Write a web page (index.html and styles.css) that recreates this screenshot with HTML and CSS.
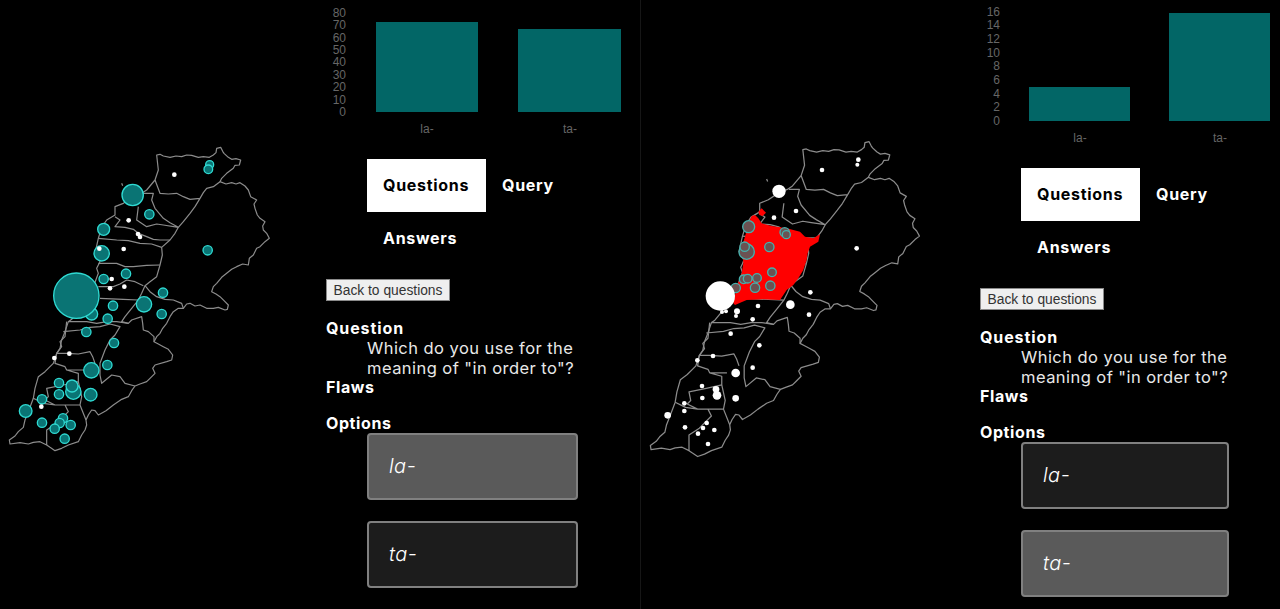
FILE: index.html
```html
<!DOCTYPE html>
<html lang="en">
<head>
<meta charset="utf-8">
<title>Language map</title>
<link rel="stylesheet" href="styles.css">
</head>
<body>
<main class="page">
  <section class="panel">
    <div class="map-col">
      <svg class="map map-a" viewBox="0 0 840 960">
        <defs>
          <g id="lb" class="outline">
            <path d="M470 45L480 43 490 48 510 52 528 48 545 50 560 45 575 46 595 52 610 50 628 52 640 45 648 38 650 25 662 22 668 34 672 40 685 52 695 58 708 56 722 60 718 75 705 76 700 85 680 100 665 115 660 125 678 132 695 128 708 132 720 128 735 138 745 150 752 170 770 180 762 192 765 205 772 225 780 235 795 245 788 258 790 270 800 280 808 295 795 305 780 320 770 325 760 345 748 355 745 375 728 372 710 380 695 388 680 400 665 412 650 430 640 440 635 455 648 462 660 470 672 482 685 495 682 508 675 510 655 502 640 505 620 505 600 495 585 498 570 490 560 492 550 505 535 505 520 515 510 530 500 550 488 565 480 580 470 590 462 605 475 612 490 620 505 628 518 645 515 660 500 665 465 675 458 685 465 700 450 715 440 725 420 732 405 738 395 752 385 770 365 778 340 795 318 812 295 825 285 812 275 810 265 825 258 840 260 855 255 870 245 885 235 905 205 915 185 925 165 932 150 922 140 915 120 905 100 907 85 912 60 908 30 912 28 900 45 888 55 875 70 862 75 840 85 815 100 775 105 745 115 710 135 695 150 680 160 670 170 640 180 625 185 600 195 575 205 545 215 538 230 520 280 440 295 400 290 385 300 365 285 340 295 295 305 262 320 240 345 225 345 200 370 190 400 170 425 160 440 150 465 120 475 90Z"/>
            <path d="M365 130L368 137M465 120L480 160 505 162 530 160 550 170 570 178 600 175 610 158 620 145 640 140 660 125M600 175L585 200 570 220 550 245 535 262 525 280 510 300 485 322 487 345 480 375 470 410 450 425 435 437 425 460 415 480 395 505 375 530 365 545 385 550 395 540 425 530 428 550 430 570 445 575 462 590 462 605"/>
            <path d="M430 160L460 160 455 180 465 205 490 235 510 248 535 262M415 200L410 240 440 260 470 252 490 255 535 262M345 230L360 240 345 260 375 262 400 268 415 280 440 290 460 298 480 300 510 300M295 295L350 300 385 302 420 310 455 312 485 322M295 370L350 370 375 380 400 380 440 376 480 375M295 440L340 440 360 432 380 420 405 425 430 437M300 475L370 478 415 480M435 437L450 455 470 470 495 478 520 480 545 490 550 505"/>
            <path d="M205 545L260 545 290 550 320 545 350 545 385 550M200 545L195 590 180 605 185 620 170 640 200 640 235 642 270 635 278 650 285 670M190 575L240 570 270 562 300 560 330 552 360 560 345 585 330 600 315 630 300 670 300 705 305 730 335 705 360 710 375 730 405 738M170 640L165 670 195 680 200 690 250 690M200 690L235 700 235 725 190 735 140 745 145 770 135 780 165 795 190 795 240 795 245 770 235 725M100 775L130 790 165 795M195 795L205 815 170 850 140 870 140 915M240 795L258 840"/>
          </g>
        </defs>
        <use href="#lb"/>
        <g class="hit">
          <circle cx="629" cy="74" r="12"/><circle cx="625" cy="88" r="13"/><circle cx="398" cy="165" r="32"/><circle cx="448" cy="223" r="14"/><circle cx="311" cy="268" r="18"/><circle cx="305" cy="340" r="23"/><circle cx="623" cy="331" r="14"/><circle cx="378" cy="401" r="14"/><circle cx="311" cy="417" r="14"/><circle cx="489" cy="458" r="14"/><circle cx="275" cy="522" r="18"/><circle cx="229" cy="467" r="68"/><circle cx="339" cy="497" r="14"/><circle cx="432" cy="493" r="23"/><circle cx="485" cy="522" r="14"/><circle cx="323" cy="536" r="14"/><circle cx="259" cy="576" r="14"/><circle cx="342" cy="609" r="14"/><circle cx="274" cy="691" r="23"/><circle cx="322" cy="675" r="14"/><circle cx="177" cy="729" r="14"/><circle cx="220" cy="755" r="23"/><circle cx="216" cy="738" r="18"/><circle cx="177" cy="763" r="14"/><circle cx="272" cy="764" r="19"/><circle cx="126" cy="778" r="14"/><circle cx="77" cy="813" r="19"/><circle cx="126" cy="848" r="14"/><circle cx="189" cy="835" r="14"/><circle cx="179" cy="849" r="14"/><circle cx="164" cy="866" r="14"/><circle cx="212" cy="855" r="14"/><circle cx="194" cy="896" r="14"/>
        </g>
        <g class="dot">
          <circle cx="523" cy="104" r="7"/><circle cx="386" cy="241" r="7"/><circle cx="414" cy="282" r="7"/><circle cx="420" cy="291" r="7"/><circle cx="298" cy="326" r="7"/><circle cx="371" cy="327" r="7"/><circle cx="335" cy="417" r="7"/><circle cx="373" cy="440" r="7"/><circle cx="330" cy="445" r="7"/><circle cx="208" cy="641" r="7"/><circle cx="163" cy="654" r="7"/><circle cx="124" cy="800" r="7"/>
        </g>
      </svg>
    </div>
    <div class="side">
      <svg class="chart chart-a" viewBox="0 0 330 140">
        <g class="tick">
          <text x="36" y="17">80</text><text x="36" y="29">70</text><text x="36" y="42">60</text><text x="36" y="54">50</text><text x="36" y="66">40</text><text x="36" y="79">30</text><text x="36" y="91">20</text><text x="36" y="104">10</text><text x="36" y="116">0</text>
        </g>
        <rect class="bar" x="66" y="22" width="102" height="90"/>
        <rect class="bar" x="208" y="29" width="103" height="83"/>
        <text class="cat" x="117" y="133">la-</text>
        <text class="cat" x="260" y="133">ta-</text>
      </svg>
      <nav class="tabs">
        <a class="tab tab-on">Questions</a>
        <a class="tab">Query</a>
        <a class="tab">Answers</a>
      </nav>
      <button class="back" type="button">Back to questions</button>
      <dl class="detail">
        <dt class="qlabel">Question</dt>
        <dd>Which do you use for the meaning of "in order to"?</dd>
        <dt class="flaws">Flaws</dt>
        <dt class="opts">Options</dt>
        <dd class="options">
          <div class="option option-on">la-</div>
          <div class="option">ta-</div>
        </dd>
      </dl>
    </div>
  </section>
  <section class="panel panel-b">
    <div class="map-col">
      <svg class="map map-b" viewBox="0 0 840 990">
        <use href="#lb" transform="translate(30 35) scale(1.035 1.038) translate(-27 -22)"/>
        <path class="red" d="M335 258L345 255 355 265 365 280 395 288 420 292 440 295 480 305 495 320 520 325 540 313 535 335 510 350 503 370 500 390 490 420 475 445 460 465 440 480 420 510 370 508 320 510 285 525 280 520 290 470 305 430 310 400 305 350 315 320 325 280ZM355 245L365 235 378 248 368 258 358 255Z"/>
        <g class="dim">
          <circle cx="326" cy="290" r="18"/><circle cx="434" cy="307" r="14"/><circle cx="439" cy="314" r="12"/><circle cx="320" cy="365" r="23"/><circle cx="314" cy="350" r="14"/><circle cx="388" cy="351" r="14"/><circle cx="396" cy="427" r="13"/><circle cx="311" cy="448" r="13"/><circle cx="323" cy="446" r="13"/><circle cx="351" cy="444" r="13"/><circle cx="345" cy="473" r="14"/><circle cx="391" cy="467" r="14"/><circle cx="287" cy="474" r="14"/>
        </g>
        <g class="dot">
          <circle cx="655" cy="89" r="7"/><circle cx="652" cy="104" r="6"/><circle cx="546" cy="120" r="7"/><circle cx="417" cy="184" r="20"/><circle cx="468" cy="243" r="7"/><circle cx="402" cy="263" r="7"/><circle cx="650" cy="355" r="7"/><circle cx="511" cy="487" r="7"/><circle cx="241" cy="498" r="44"/><circle cx="354" cy="528" r="7"/><circle cx="451" cy="524" r="13"/><circle cx="507" cy="554" r="7"/><circle cx="291" cy="544" r="9"/><circle cx="288" cy="558" r="6"/><circle cx="258" cy="544" r="6"/><circle cx="246" cy="546" r="6"/><circle cx="338" cy="568" r="7"/><circle cx="272" cy="611" r="7"/><circle cx="358" cy="646" r="7"/><circle cx="172" cy="691" r="7"/><circle cx="219" cy="678" r="7"/><circle cx="338" cy="713" r="7"/><circle cx="287" cy="729" r="13"/><circle cx="186" cy="768" r="7"/><circle cx="228" cy="778" r="10"/><circle cx="231" cy="796" r="13"/><circle cx="187" cy="804" r="7"/><circle cx="287" cy="805" r="10"/><circle cx="133" cy="820" r="7"/><circle cx="133" cy="843" r="7"/><circle cx="83" cy="856" r="10"/><circle cx="135" cy="892" r="7"/><circle cx="200" cy="879" r="7"/><circle cx="189" cy="894" r="7"/><circle cx="174" cy="911" r="7"/><circle cx="223" cy="900" r="7"/><circle cx="204" cy="942" r="7"/>
        </g>
      </svg>
    </div>
    <div class="side">
      <svg class="chart chart-b" viewBox="0 0 316 149">
        <g class="tick">
          <text x="36" y="16">16</text><text x="36" y="29">14</text><text x="36" y="43">12</text><text x="36" y="57">10</text><text x="36" y="70">8</text><text x="36" y="84">6</text><text x="36" y="98">4</text><text x="36" y="111">2</text><text x="36" y="125">0</text>
        </g>
        <rect class="bar" x="65" y="87" width="101" height="34"/>
        <rect class="bar" x="205" y="13" width="101" height="108"/>
        <text class="cat" x="116" y="142">la-</text>
        <text class="cat" x="256" y="142">ta-</text>
      </svg>
      <nav class="tabs">
        <a class="tab tab-on">Questions</a>
        <a class="tab">Query</a>
        <a class="tab">Answers</a>
      </nav>
      <button class="back" type="button">Back to questions</button>
      <dl class="detail">
        <dt class="qlabel">Question</dt>
        <dd>Which do you use for the meaning of "in order to"?</dd>
        <dt class="flaws">Flaws</dt>
        <dt class="opts">Options</dt>
        <dd class="options">
          <div class="option">la-</div>
          <div class="option option-on">ta-</div>
        </dd>
      </dl>
    </div>
  </section>
</main>
</body>
</html>
```
FILE: styles.css
```css
* { box-sizing: border-box; }
html, body { margin: 0; height: 100%; background: #000; }
body { overflow: hidden; font-family: Inter, "Noto Sans", sans-serif; color: #fff; }

.page { display: flex; width: 1280px; height: 609px; }
.panel { display: flex; width: 640px; height: 609px; overflow: hidden; }
.panel-b { border-left: 1px solid #161616; }

.map-col { width: 310px; flex: none; padding-top: 140px; }
.panel-b .map-col { width: 323px; padding-top: 130px; }
.map { display: block; width: 280px; }
.map-a { height: 320px; }
.map-b { height: 330px; margin-left: -1px; }

.outline { fill: none; stroke: #8c8c8c; stroke-width: 3.6; stroke-linejoin: round; }
.hit circle { fill: #0a7474; stroke: #2fdad2; stroke-width: 4; }
.dot circle { fill: #fff; }
.dim circle { fill: #6b5252; stroke: #45b0ad; stroke-width: 4; }
.red { fill: #f00; }

.side { flex: 1; min-width: 0; }
.chart { display: block; width: 100%; }
.chart-a { height: 140px; }
.chart-b { height: 149px; }
.bar { fill: #026666; }
.tick text { font: 12px "Liberation Sans", Arial, sans-serif; fill: #666; text-anchor: end; }
.cat { font: 12px "Liberation Sans", Arial, sans-serif; fill: #666; text-anchor: middle; }

.tabs { display: flex; flex-wrap: wrap; width: 230px; margin: 19px 0 15px 57px; }
.tab { display: block; height: 53px; padding: 0 16px; font-size: 16px; font-weight: 700; line-height: 53px; letter-spacing: .7px; color: #fff; white-space: nowrap; }
.tab-on { width: 119px; background: #fff; color: #000; }

.back { display: block; width: 124px; height: 22px; margin: -1px 0 0 16px; padding: 0; background: #efefef; border: 1px solid #8a8a8a; font: 13.8px "Liberation Sans", Arial, sans-serif; color: #333; }

.detail { margin: 17px 0 0 16px; font-size: 16px; line-height: 20px; }
.detail dt { font-weight: 700; letter-spacing: .6px; }
.detail .qlabel { letter-spacing: .9px; }
.detail dd { width: 225px; margin: 0 0 0 41px; font-size: 16.5px; letter-spacing: .45px; line-height: 20px; color: #e8e8e8; }
.detail .flaws { margin: -1px 0 16px; }
.detail .options { width: 211px; margin-top: 0; }
.panel-b .detail .options { width: 208px; }

.option { height: 67px; margin-bottom: 21px; padding-left: 20px; background: #1c1c1c; border: 2px solid #808080; border-radius: 4px; font-size: 20px; font-style: italic; font-weight: 300; line-height: 63px; color: #fff; }
.option-on { background: #5a5a5a; }
```
